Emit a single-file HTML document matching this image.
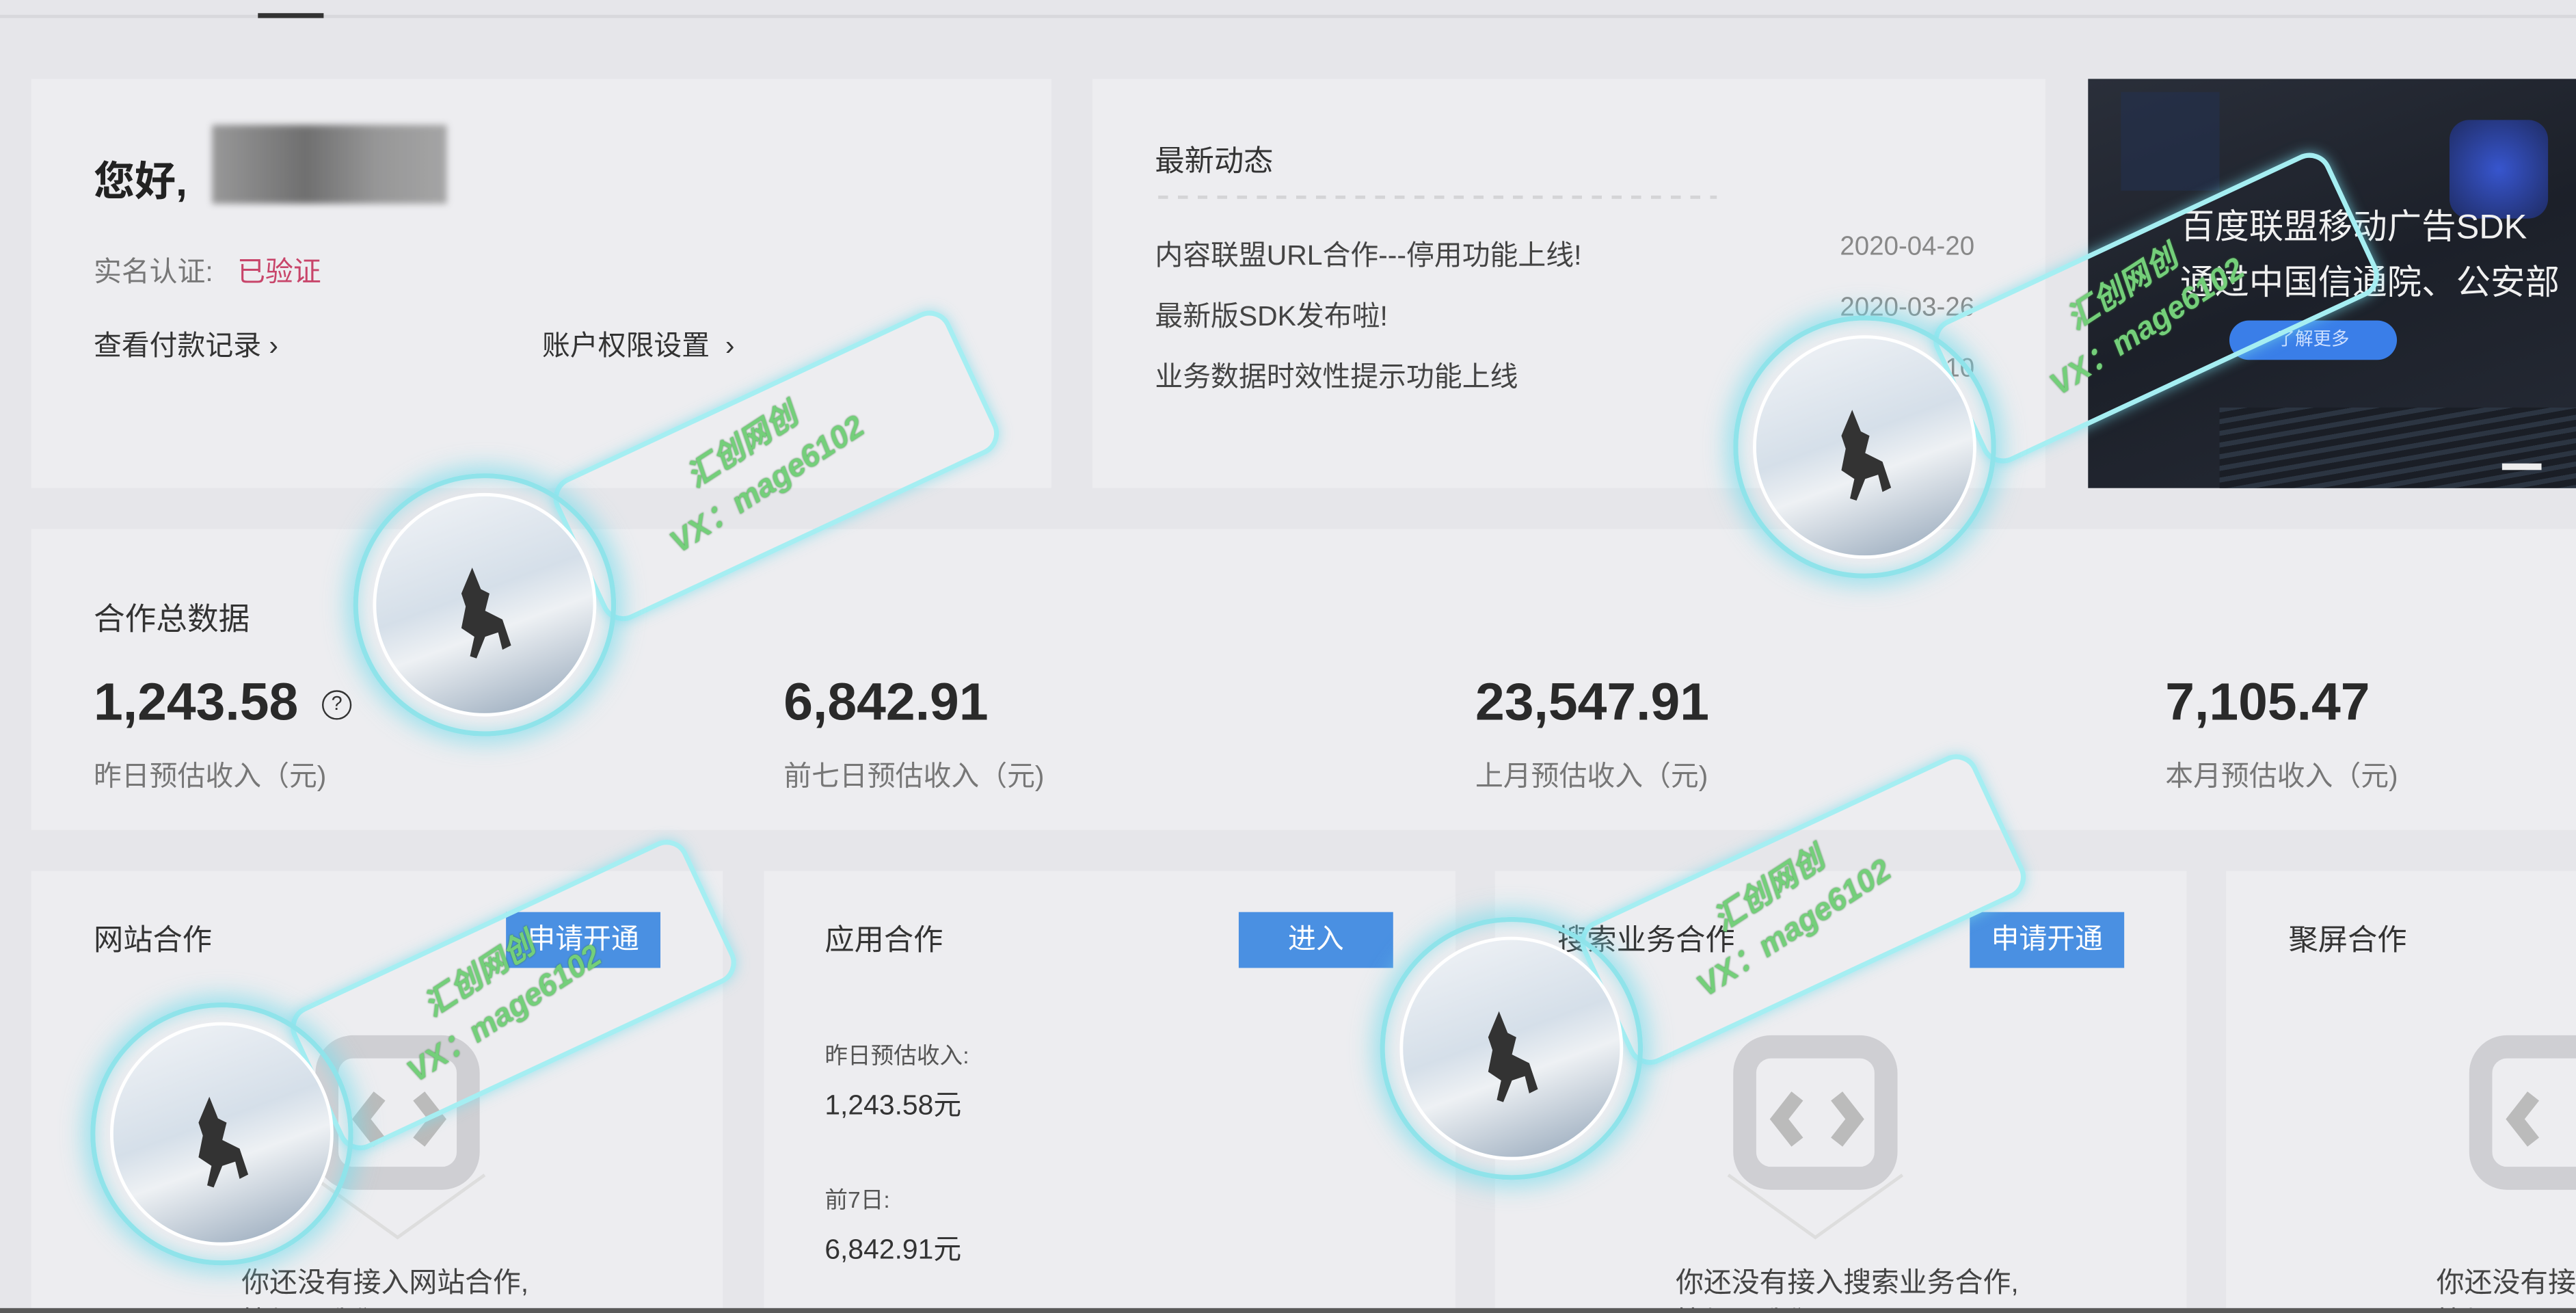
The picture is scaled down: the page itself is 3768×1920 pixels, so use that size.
<!DOCTYPE html>
<html><head><meta charset="utf-8"><style>
*{margin:0;padding:0;box-sizing:border-box}
html,body{width:3768px;height:1920px;overflow:hidden;background:#e6e6ea}
#s{position:absolute;left:0;top:0;width:1568px;height:799px;overflow:hidden;transform:scale(2.40306);transform-origin:0 0;font-family:"Liberation Sans","Noto Sans CJK SC",sans-serif;color:#333}
.a{position:absolute}
.card{position:absolute;background:#ededf0}
.btn{position:absolute;background:#4a90e2;color:#fff;font-size:17px;text-align:center;line-height:34px;width:94px;height:34px}
.t{font-size:18px;color:#333}
.g{color:#777;font-size:17px}
.num{font-size:32px;font-weight:bold;color:#2a2a2a}
.wm{position:absolute;width:0;height:0}
.wm .c{position:absolute;left:-80px;top:-80px;width:160px;height:160px;border-radius:50%;border:3px solid #8fe3ea;box-shadow:0 0 14px 4px rgba(120,220,235,.7),inset 0 0 10px rgba(120,220,235,.6)}
.wm .c2{position:absolute;left:-68px;top:-68px;width:136px;height:136px;border-radius:50%;border:2px solid #fff;background:linear-gradient(160deg,#f2f4f7 0%,#d5dfe9 45%,#eef1f4 60%,#8fa2b6 100%);overflow:hidden}
.wm .r{position:absolute;left:45px;top:-132px;width:265px;height:95px;border:3px solid #a5eef2;border-radius:14px;transform:rotate(-25deg);box-shadow:0 0 8px rgba(120,220,235,.7)}
.wm .tx{position:absolute;left:85px;top:-112px;width:160px;transform:rotate(-33deg);color:#74cf7a;font-weight:bold;font-style:italic;font-size:19px;line-height:28px;text-shadow:0 0 1px #3a7a3e;white-space:nowrap;text-align:center}
.horse{position:absolute;left:40px;top:38px;width:50px;height:66px}
.ph{position:absolute;width:130px;height:120px}
</style></head><body><div id="s">
<div class="a" style="left:0;top:9px;width:1568px;height:2px;background:#d8d8dc"></div>
<div class="a" style="left:157px;top:8px;width:40px;height:3px;background:#333"></div>

<div class="card" style="left:19px;top:48px;width:621px;height:249px">
 <div class="a" style="left:38px;top:43px;font-size:25px;font-weight:bold;color:#222">您好,</div>
 <div class="a" style="left:110px;top:28px;width:143px;height:48px;background:linear-gradient(90deg,#8a8a8a,#5a5a5a 40%,#888 70%,#999);filter:blur(2px);opacity:.85"></div>
 <div class="a g" style="left:38px;top:103px">实名认证: <span style="color:#c8456a;margin-left:10px">已验证</span></div>
 <div class="a" style="left:38px;top:148px;font-size:17px;color:#333">查看付款记录 ›</div>
 <div class="a" style="left:311px;top:148px;font-size:17px;color:#333">账户权限设置 &nbsp;›</div>
</div>

<div class="card" style="left:665px;top:48px;width:580px;height:249px">
 <div class="a" style="left:38px;top:36px;font-size:18px;color:#333">最新动态</div>
 <div class="a" style="left:40px;top:71px;width:340px;height:2px;background:repeating-linear-gradient(90deg,#999 0 6px,transparent 6px 12px);opacity:.3"></div>
 <div class="a" style="left:38px;top:93px;font-size:17px;color:#444">内容联盟URL合作---停用功能上线!</div>
 <div class="a" style="left:455px;top:94px;font-size:16px;color:#888">2020-04-20</div>
 <div class="a" style="left:38px;top:130px;font-size:17px;color:#444">最新版SDK发布啦!</div>
 <div class="a" style="left:455px;top:131px;font-size:16px;color:#888">2020-03-26</div>
 <div class="a" style="left:38px;top:167px;font-size:17px;color:#444">业务数据时效性提示功能上线</div>
 <div class="a" style="left:455px;top:168px;font-size:16px;color:#888">2020-02-10</div>
</div>

<div class="a" style="left:1271px;top:48px;width:297px;height:249px;background:linear-gradient(160deg,#2a2f3a,#1c2029 50%,#262b36);overflow:hidden">
 <div class="a" style="left:220px;top:25px;width:60px;height:60px;border-radius:12px;background:radial-gradient(circle,#3a5be0,#1f2d6a);opacity:.9"></div>
 <div class="a" style="left:20px;top:8px;width:60px;height:60px;background:#23314f;opacity:.6"></div>
 <div class="a" style="left:80px;top:200px;width:230px;height:60px;background:repeating-linear-gradient(170deg,#2c3542 0 3px,#1a1e26 3px 7px)"></div>
 <div class="a" style="left:56px;top:74px;color:#f0f0f0;font-size:21px;white-space:nowrap">百度联盟移动广告SDK</div>
 <div class="a" style="left:56px;top:108px;color:#f0f0f0;font-size:21px;white-space:nowrap">通过中国信通院、公安部</div>
 <div class="a" style="left:86px;top:147px;width:102px;height:24px;border-radius:12px;background:#3a7ee8;color:#cfe0ff;font-size:11px;text-align:center;line-height:24px">了解更多</div>
 <div class="a" style="left:252px;top:234px;width:24px;height:4px;background:#eee"></div>
</div>

<div class="card" style="left:19px;top:322px;width:1549px;height:183px">
 <div class="a" style="left:38px;top:40px;font-size:19px">合作总数据</div>
 <div class="a num" style="left:38px;top:87px">1,243.58</div>
 <div class="a" style="left:177px;top:98px;width:18px;height:18px;border:1.5px solid #333;border-radius:50%;font-size:12px;text-align:center;line-height:15px">?</div>
 <div class="a g" style="left:38px;top:136px">昨日预估收入（元)</div>
 <div class="a num" style="left:458px;top:87px">6,842.91</div>
 <div class="a g" style="left:458px;top:136px">前七日预估收入（元)</div>
 <div class="a num" style="left:879px;top:87px">23,547.91</div>
 <div class="a g" style="left:879px;top:136px">上月预估收入（元)</div>
 <div class="a num" style="left:1299px;top:87px">7,105.47</div>
 <div class="a g" style="left:1299px;top:136px">本月预估收入（元)</div>
</div>

<div class="card" style="left:19px;top:530px;width:421px;height:269px">
 <div class="a t" style="left:38px;top:28px">网站合作</div>
 <div class="btn" style="left:289px;top:25px">申请开通</div>
 <div class="ph" style="left:150px;top:95px"><svg width="140" height="130"><rect x="30" y="12" width="86" height="80" rx="16" fill="none" stroke="#cfcfd3" stroke-width="14"/><path d="M62 42l-11 14 11 14M86 42l11 14-11 14" stroke="#bbb" stroke-width="9" fill="none"/><path d="M20 90l53 38 53-38" stroke="#ddd" stroke-width="2" fill="none"/></svg></div>
 <div class="a" style="left:128px;top:236px;font-size:17px;color:#444">你还没有接入网站合作,</div>
 <div class="a" style="left:128px;top:260px;font-size:17px;color:#444">快加入我们吧</div>
</div>
<div class="card" style="left:465px;top:530px;width:421px;height:269px">
 <div class="a t" style="left:37px;top:28px">应用合作</div>
 <div class="btn" style="left:289px;top:25px">进入</div>
 <div class="a" style="left:37px;top:102px;font-size:14px;color:#555">昨日预估收入:</div>
 <div class="a" style="left:37px;top:128px;font-size:17px;color:#333">1,243.58元</div>
 <div class="a" style="left:37px;top:190px;font-size:14px;color:#555">前7日:</div>
 <div class="a" style="left:37px;top:216px;font-size:17px;color:#333">6,842.91元</div>
</div>
<div class="card" style="left:910px;top:530px;width:421px;height:269px">
 <div class="a t" style="left:38px;top:28px">搜索业务合作</div>
 <div class="btn" style="left:289px;top:25px">申请开通</div>
 <div class="ph" style="left:122px;top:95px"><svg width="140" height="130"><rect x="30" y="12" width="86" height="80" rx="16" fill="none" stroke="#cfcfd3" stroke-width="14"/><path d="M62 42l-11 14 11 14M86 42l11 14-11 14" stroke="#bbb" stroke-width="9" fill="none"/><path d="M20 90l53 38 53-38" stroke="#ddd" stroke-width="2" fill="none"/></svg></div>
 <div class="a" style="left:110px;top:236px;font-size:17px;color:#444">你还没有接入搜索业务合作,</div>
 <div class="a" style="left:110px;top:260px;font-size:17px;color:#444">快加入我们吧</div>
</div>
<div class="card" style="left:1355px;top:530px;width:213px;height:269px;overflow:hidden">
 <div class="a t" style="left:38px;top:28px">聚屏合作</div>
 <div class="ph" style="left:125px;top:95px"><svg width="140" height="130"><rect x="30" y="12" width="86" height="80" rx="16" fill="none" stroke="#cfcfd3" stroke-width="14"/><path d="M62 42l-11 14 11 14" stroke="#bbb" stroke-width="9" fill="none"/></svg></div>
 <div class="a" style="left:128px;top:236px;font-size:17px;color:#444;white-space:nowrap">你还没有接入</div>
 <div class="a" style="left:128px;top:260px;font-size:17px;color:#444">快加入</div>
</div>
<div class="a" style="left:0;top:796px;width:1568px;height:3px;background:#5a5a5a"></div>

<div class="wm" style="left:295px;top:368px"><div class="r"></div><div class="c"></div><div class="c2"><svg class="horse" viewBox="0 0 38 50"><path d="M14 4l4 10 4 2-2 8 8 4 4 12-4 2-2-8-6 2-4 10-3-1 2-9-6-4 2-10-2-6z" fill="#333"/></svg></div><div class="tx">汇创网创<br>VX：mage6102</div></div>
<div class="wm" style="left:1135px;top:272px"><div class="r"></div><div class="c"></div><div class="c2"><svg class="horse" viewBox="0 0 38 50"><path d="M14 4l4 10 4 2-2 8 8 4 4 12-4 2-2-8-6 2-4 10-3-1 2-9-6-4 2-10-2-6z" fill="#333"/></svg></div><div class="tx">汇创网创<br>VX：mage6102</div></div>
<div class="wm" style="left:135px;top:690px"><div class="r"></div><div class="c"></div><div class="c2"><svg class="horse" viewBox="0 0 38 50"><path d="M14 4l4 10 4 2-2 8 8 4 4 12-4 2-2-8-6 2-4 10-3-1 2-9-6-4 2-10-2-6z" fill="#333"/></svg></div><div class="tx">汇创网创<br>VX：mage6102</div></div>
<div class="wm" style="left:920px;top:638px"><div class="r"></div><div class="c"></div><div class="c2"><svg class="horse" viewBox="0 0 38 50"><path d="M14 4l4 10 4 2-2 8 8 4 4 12-4 2-2-8-6 2-4 10-3-1 2-9-6-4 2-10-2-6z" fill="#333"/></svg></div><div class="tx">汇创网创<br>VX：mage6102</div></div>
</div></body></html>
